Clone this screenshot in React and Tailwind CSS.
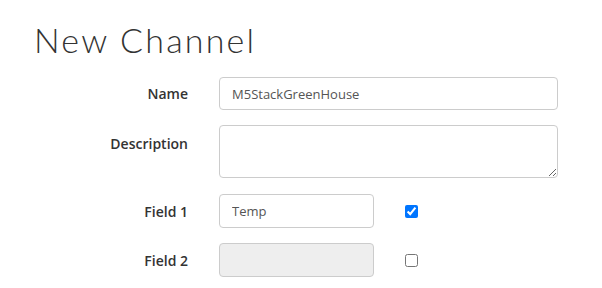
export default function App() {
  return (
    <div className="h-[288px] w-[602px] overflow-hidden bg-white font-['Open_Sans',sans-serif] text-[#333]">
      <h1 className="ml-[34px] pt-[18px] font-['Lato',sans-serif] text-[34px] font-light leading-[44px] tracking-[2.2px] text-[#333]">
        New Channel
      </h1>
      <form className="mt-[15px] flex flex-col gap-[16px]">
        <div className="flex items-center">
          <label className="w-[188px] text-right text-[14px] font-semibold">Name</label>
          <input
            type="text"
            defaultValue="M5StackGreenHouse"
            className="ml-[31px] h-[33px] w-[339px] rounded-[4px] border border-[#ccc] px-[12px] text-[13px] text-[#555] outline-none"
          />
        </div>
        <div className="-mt-[1px] flex items-start">
          <label className="mt-[8px] w-[188px] text-right text-[14px] font-semibold">Description</label>
          <textarea className="ml-[31px] h-[53px] w-[339px] rounded-[4px] border border-[#ccc] px-[12px] text-[13px] text-[#555] outline-none" />
        </div>
        <div className="flex items-center">
          <label className="w-[188px] text-right text-[14px] font-semibold">Field 1</label>
          <input
            type="text"
            defaultValue="Temp"
            className="ml-[31px] h-[34px] w-[155px] rounded-[4px] border border-[#ccc] px-[12px] text-[13px] text-[#555] outline-none"
          />
          <input type="checkbox" defaultChecked className="ml-[31px] h-[13px] w-[13px] accent-[#0075ff]" />
        </div>
        <div className="-mt-[1px] flex items-center">
          <label className="w-[188px] text-right text-[14px] font-semibold">Field 2</label>
          <input
            type="text"
            disabled
            className="ml-[31px] h-[34px] w-[155px] rounded-[4px] border border-[#ccc] bg-[#eee] px-[12px] text-[13px] text-[#555] outline-none"
          />
          <input type="checkbox" className="ml-[31px] h-[13px] w-[13px]" />
        </div>
      </form>
    </div>
  )
}
